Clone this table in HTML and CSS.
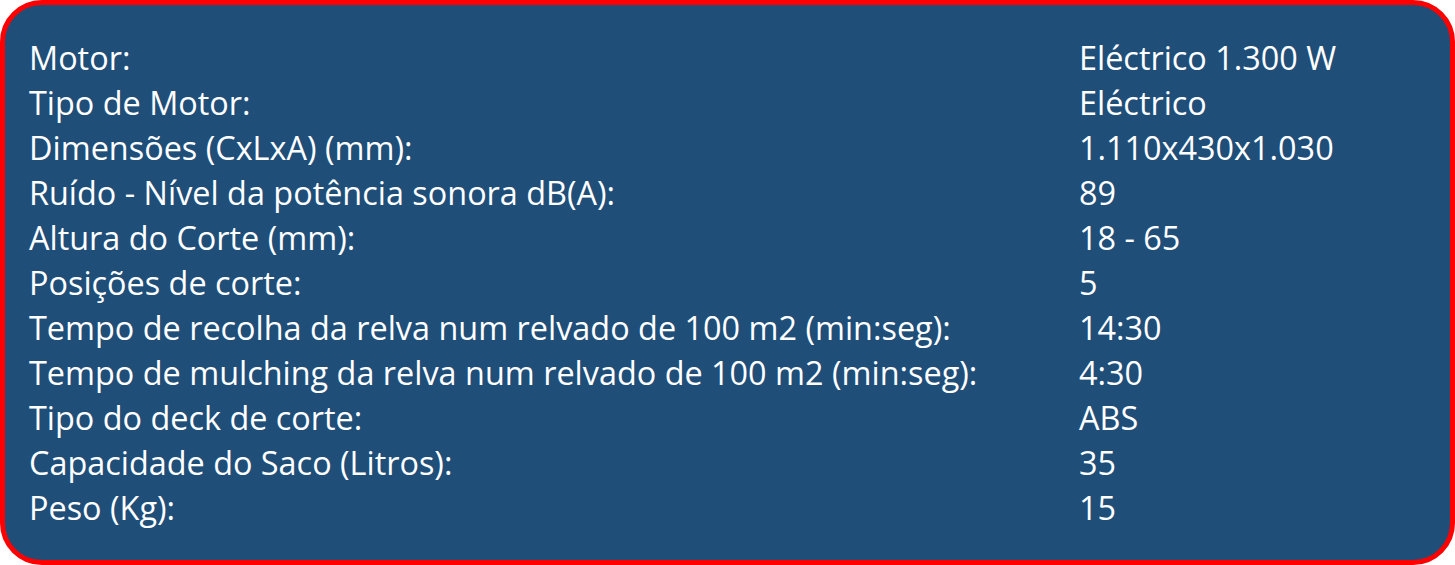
FILE: index.html
```html
<!DOCTYPE html>
<html lang="pt">
<head>
<meta charset="utf-8">
<link rel="stylesheet" href="styles.css">
</head>
<body>
<div class="card">
  <dl class="specs">
    <dt>Motor:</dt><dd>Eléctrico 1.300 W</dd>
    <dt>Tipo de Motor:</dt><dd>Eléctrico</dd>
    <dt>Dimensões (CxLxA) (mm):</dt><dd>1.110x430x1.030</dd>
    <dt>Ruído - Nível da potência sonora dB(A):</dt><dd>89</dd>
    <dt>Altura do Corte (mm):</dt><dd>18 - 65</dd>
    <dt>Posições de corte:</dt><dd>5</dd>
    <dt>Tempo de recolha da relva num relvado de 100 m2 (min:seg):</dt><dd>14:30</dd>
    <dt>Tempo de mulching da relva num relvado de 100 m2 (min:seg):</dt><dd>4:30</dd>
    <dt>Tipo do deck de corte:</dt><dd>ABS</dd>
    <dt>Capacidade do Saco (Litros):</dt><dd>35</dd>
    <dt>Peso (Kg):</dt><dd>15</dd>
  </dl>
</div>
</body>
</html>
```
FILE: styles.css
```css
html, body {
  margin: 0;
  padding: 0;
  background: #ffffff;
}
.card {
  box-sizing: border-box;
  width: 1455px;
  height: 565px;
  background: #1f4e79;
  border: 5px solid #ff0000;
  border-radius: 42px;
  padding: 30px 0 0 24px;
}
.specs {
  margin: 0;
  display: grid;
  grid-template-columns: 1050px auto;
  grid-auto-rows: 45px;
  font-family: "Open Sans", sans-serif;
  font-size: 32.4px;
  color: #ffffff;
  line-height: 45px;
}
.specs dt, .specs dd {
  margin: 0;
  white-space: nowrap;
}
```
